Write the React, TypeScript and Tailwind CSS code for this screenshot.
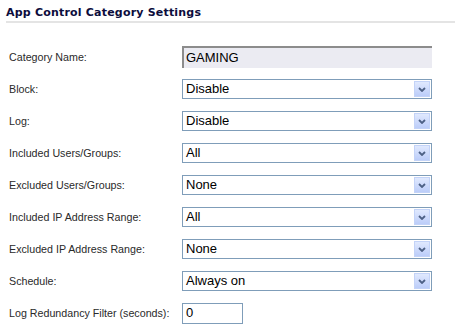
import React from 'react';

const rows: { label: string; value: string; kind: 'text' | 'select' | 'small' }[] = [
  { label: 'Category Name:', value: 'GAMING', kind: 'text' },
  { label: 'Block:', value: 'Disable', kind: 'select' },
  { label: 'Log:', value: 'Disable', kind: 'select' },
  { label: 'Included Users/Groups:', value: 'All', kind: 'select' },
  { label: 'Excluded Users/Groups:', value: 'None', kind: 'select' },
  { label: 'Included IP Address Range:', value: 'All', kind: 'select' },
  { label: 'Excluded IP Address Range:', value: 'None', kind: 'select' },
  { label: 'Schedule:', value: 'Always on', kind: 'select' },
  { label: 'Log Redundancy Filter (seconds):', value: '0', kind: 'small' },
];

const Arrow = () => (
  <div className="w-[16px] h-[16px] mr-[1px] flex items-center justify-center border border-[#c3d3f8] bg-gradient-to-b from-[#e0e9fe] to-[#bccdf9]">
    <svg width="8" height="5" viewBox="0 0 8 5">
      <polyline points="1,1 4,4 7,1" fill="none" stroke="#4d6185" strokeWidth="1.8" />
    </svg>
  </div>
);

const Control = ({ value, kind }: { value: string; kind: string }) => {
  if (kind === 'text') {
    return (
      <div className="w-[250px] h-[22px] flex items-center pl-[2px] bg-[#ebebf2] border-t-2 border-l-2 border-t-[#8c8c8c] border-l-[#8c8c8c] text-[13px] text-black">
        {value}
      </div>
    );
  }
  if (kind === 'small') {
    return (
      <div className="w-[61px] h-[21px] flex items-center pl-[3px] bg-white border border-[#7f9db9] text-[13px] text-black">
        {value}
      </div>
    );
  }
  return (
    <div className="w-[250px] h-[20px] flex items-center justify-between pl-[3px] bg-white border border-[#7f9db9] text-[13px] text-black">
      <span>{value}</span>
      <Arrow />
    </div>
  );
};

export default function App() {
  return (
    <div className="w-[455px] h-[334px] bg-white overflow-hidden" style={{ fontFamily: '"Liberation Sans", Arial, sans-serif' }}>
      <div className="pl-[6px] pt-[6px]">
        <h2 className="text-[11px] font-bold text-[#0c0c3c] leading-[14px] tracking-[0.2px]" style={{ fontFamily: '"DejaVu Sans", Verdana, sans-serif' }}>
          App Control Category Settings
        </h2>
        <div className="mt-[1px] h-[2px] bg-[#e4e4e4]" />
      </div>
      <div className="mt-[18px]">
        {rows.map((r) => (
          <div key={r.label} className="h-[32px] flex items-center">
            <div className="w-[182px] pl-[9px] text-[10.7px] text-[#2a2a2a]">{r.label}</div>
            <Control value={r.value} kind={r.kind} />
          </div>
        ))}
      </div>
    </div>
  );
}
